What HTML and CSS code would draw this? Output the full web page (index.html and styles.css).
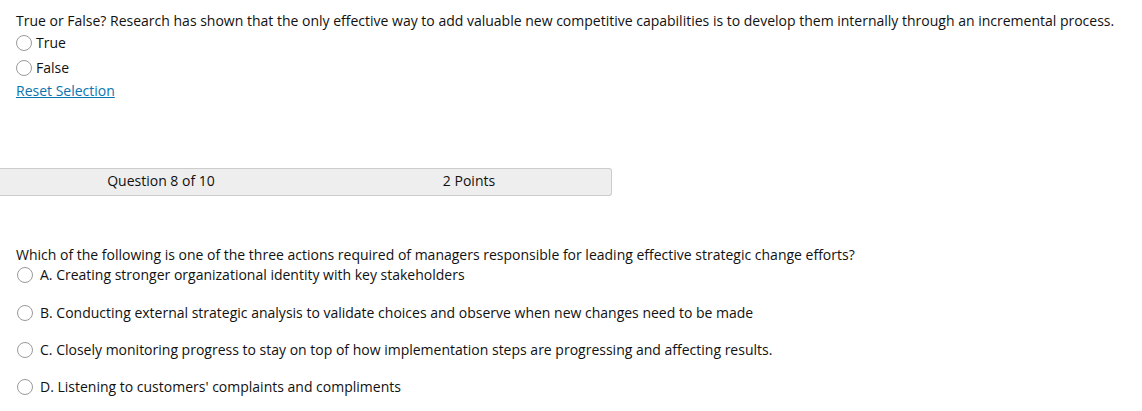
FILE: index.html
```html
<!DOCTYPE html>
<html>
<head>
<meta charset="utf-8">
<link rel="stylesheet" href="styles.css">
</head>
<body>
<div class="q1">
  <div class="qtext">True or False? Research has shown that the only effective way to add valuable new competitive capabilities is to develop them internally through an incremental process.</div>
  <div class="opt tf"><span class="radio"></span><span>True</span></div>
  <div class="opt tf"><span class="radio"></span><span>False</span></div>
  <a class="reset" href="#">Reset Selection</a>
</div>
<div class="qbar">
  <div class="qnum">Question 8 of 10</div>
  <div class="qpts">2 Points</div>
</div>
<div class="q2">
  <div class="qtext">Which of the following is one of the three actions required of managers responsible for leading effective strategic change efforts?</div>
  <div class="opt mc"><span class="radio"></span><span>A. Creating stronger organizational identity with key stakeholders</span></div>
  <div class="opt mc first-gap"><span class="radio"></span><span>B. Conducting external strategic analysis to validate choices and observe when new changes need to be made</span></div>
  <div class="opt mc"><span class="radio"></span><span>C. Closely monitoring progress to stay on top of how implementation steps are progressing and affecting results.</span></div>
  <div class="opt mc"><span class="radio"></span><span>D. Listening to customers' complaints and compliments</span></div>
</div>
</body>
</html>
```
FILE: styles.css
```css
body {
  margin: 0;
  font-family: "Open Sans", sans-serif;
  font-size: 14px;
  color: #111;
  background: #fff;
}
.q1 {
  padding: 11px 16px 0 16px;
  height: 168px;
  box-sizing: border-box;
}
.qtext {
  line-height: 20px;
}
.opt {
  display: flex;
  align-items: center;
  line-height: 20px;
}
.tf {
  gap: 4px;
  margin-top: 2px;
}
.tf + .tf {
  margin-top: 5px;
}
.radio {
  width: 14px;
  height: 14px;
  border: 1px solid #9a9a9a;
  border-radius: 50%;
  background: #fff;
  flex: none;
  box-sizing: content-box;
}
.reset {
  display: inline-block;
  margin-top: 3px;
  line-height: 20px;
  color: #0a74b0;
  text-decoration: underline;
}
.qbar {
  display: flex;
  width: 612px;
  height: 28px;
  box-sizing: border-box;
  background: #eeeeee;
  border: 1px solid #cccccc;
  border-left: none;
  border-radius: 0 3px 3px 0;
  align-items: center;
  padding-bottom: 3px;
}
.qnum {
  width: 322px;
  flex: none;
  text-align: center;
}
.qpts {
  width: 294px;
  flex: none;
  text-align: center;
}
.q2 {
  padding: 49px 16px 0 16px;
}
.mc {
  gap: 7px;
  padding-left: 1px;
}
.mc + .mc {
  margin-top: 17px;
}
.mc.first-gap {
  margin-top: 18px;
}
```
